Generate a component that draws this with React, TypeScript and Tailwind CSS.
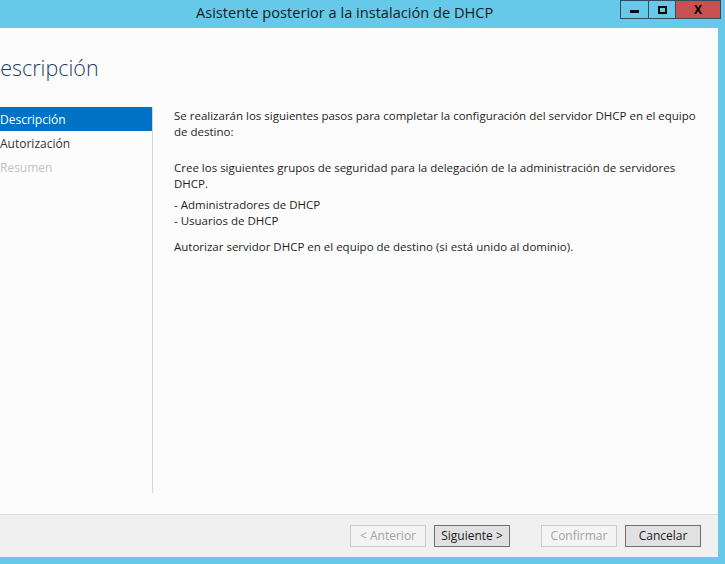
import React from 'react';

const font = { fontFamily: '"Segoe UI", "Open Sans", "Noto Sans", sans-serif' };

const steps = [
  { label: 'Descripción', state: 'active' },
  { label: 'Autorización', state: 'normal' },
  { label: 'Resumen', state: 'disabled' },
];

const WizardButton: React.FC<{ label: string; disabled?: boolean }> = ({ label, disabled }) => (
  <button
    className={
      disabled
        ? 'h-[22px] w-[76px] border border-[#cccccc] bg-[#f4f4f4] text-[12px] text-[#a3a3a3]'
        : 'h-[22px] w-[76px] border border-[#707070] bg-[#e1e1e1] text-[12px] text-[#1a1a1a]'
    }
  >
    {label}
  </button>
);

const App: React.FC = () => {
  return (
    <div className="flex h-[564px] w-[725px] flex-col overflow-hidden bg-[#66c9ea]" style={font}>
      {/* title bar */}
      <div className="flex h-[28px] shrink-0 items-start">
        <div className="w-[196px] shrink-0" />
        <div className="pt-[2px] text-[14.6px] text-[#1b1b1b]">Asistente posterior a la instalación de DHCP</div>
        <div className="flex-1" />
        <div className="mr-[4px] flex h-[19px]">
          <div className="flex w-[28px] items-center justify-center border border-r-0 border-[#2d4e5d]">
            <div className="mt-[4px] h-[3px] w-[9px] bg-black" />
          </div>
          <div className="flex w-[27px] items-center justify-center border border-r-0 border-[#2d4e5d]">
            <div className="h-[8px] w-[9px] border-2 border-black" />
          </div>
          <div className="flex w-[46px] items-center justify-center border border-[#2d4e5d] bg-[#c75050] text-[12px] font-bold text-black">
            X
          </div>
        </div>
      </div>

      <div className="mr-[7px] flex flex-1 flex-col">
        {/* body */}
        <div className="flex flex-1 flex-col bg-[#fcfcfc]">
          <div className="ml-[-15px] mt-[24px] h-[55px] text-[21.5px] font-light text-[#1e3c64]">Descripción</div>
          <div className="flex flex-1 pb-[21px]">
            <div className="w-[153px] shrink-0 border-r border-[#d4d4d4]">
              {steps.map((s) => (
                <div
                  key={s.label}
                  className={
                    s.state === 'active'
                      ? 'h-[24px] bg-[#0072c6] pt-[2px] text-[12px] leading-[22px] text-white'
                      : s.state === 'disabled'
                      ? 'h-[24px] pt-[2px] text-[12px] leading-[22px] text-[#c2c2c2]'
                      : 'h-[24px] pt-[2px] text-[12px] leading-[22px] text-[#333333]'
                  }
                >
                  {s.label}
                </div>
              ))}
            </div>
            <div className="pl-[21px] pr-[20px] pt-[1px] text-[11.5px] leading-[16px] text-[#1e1e1e]">
              <p>
                Se realizarán los siguientes pasos para completar la configuración del servidor DHCP en el equipo de
                destino:
              </p>
              <p className="mt-[20px]">
                Cree los siguientes grupos de seguridad para la delegación de la administración de servidores DHCP.
              </p>
              <p className="mt-[5px]">- Administradores de DHCP</p>
              <p>- Usuarios de DHCP</p>
              <p className="mt-[10px]">Autorizar servidor DHCP en el equipo de destino (si está unido al dominio).</p>
            </div>
          </div>
        </div>
        {/* footer */}
        <div className="flex h-[43px] shrink-0 items-center border-t border-[#dcdcdc] bg-[#f0f0f0] pr-[17px]">
          <div className="flex-1" />
          <div className="flex gap-[8px]">
            <WizardButton label="< Anterior" disabled />
            <WizardButton label="Siguiente >" />
          </div>
          <div className="ml-[31px] flex gap-[8px]">
            <WizardButton label="Confirmar" disabled />
            <WizardButton label="Cancelar" />
          </div>
        </div>
      </div>
      <div className="h-[7px] shrink-0" />
    </div>
  );
};

export default App;
